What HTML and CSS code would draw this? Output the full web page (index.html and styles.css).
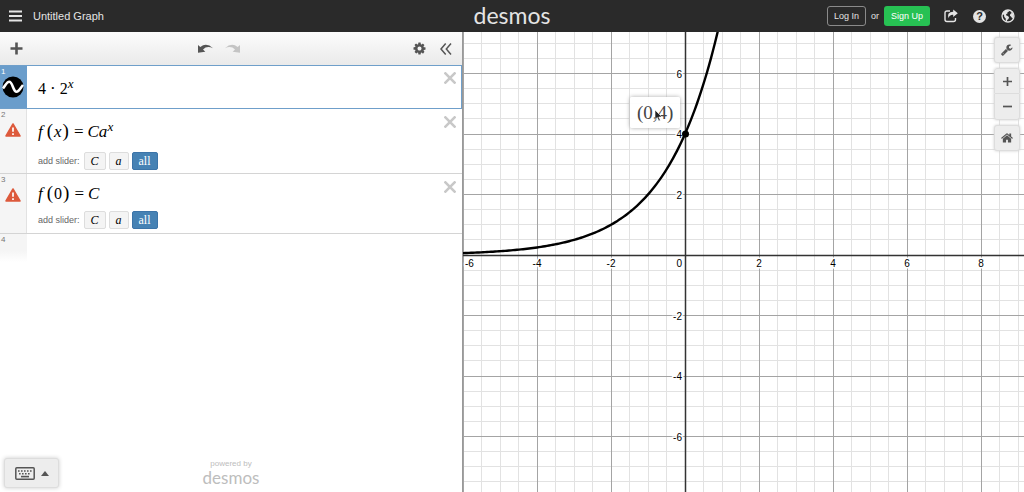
FILE: index.html
```html
<!DOCTYPE html>
<html lang="en">
<head>
<meta charset="utf-8">
<title>Untitled Graph</title>
<link rel="stylesheet" href="styles.css">
</head>
<body>
<div class="app">
  <header class="header">
    <div class="header-side">
      <button class="icon-button menu" aria-label="Menu"><svg width="14" height="12" viewBox="0 0 14 12"><path d="M0 1.500h13M0 6h13M0 10.500h13" stroke="#e4e4e4" stroke-width="1.800"/></svg></button>
      <h1 class="title">Untitled Graph</h1>
    </div>
    <div class="brand">desmos</div>
    <div class="header-side header-end">
      <button class="login">Log In</button>
      <span class="or">or</span>
      <button class="signup">Sign Up</button>
      <button class="icon-button share" aria-label="Share"><svg width="14" height="14" viewBox="0 0 14 14"><path d="M6 2H3Q1 2 1 4v6.500q0 2 2 2h6.500q2 0 2-2V9" fill="none" stroke="#e4e4e4" stroke-width="1.400"/><path d="M9.200 0.500L13.800 4.300L9.200 8.100V5.700Q5.500 5.500 4.300 9.300Q2.600 2.900 9.200 2.800Z" fill="#e4e4e4"/></svg></button>
      <button class="icon-button help" aria-label="Help"><span class="help-mark">?</span></button>
      <button class="icon-button" aria-label="Language"><svg width="14" height="14" viewBox="0 0 14 14"><circle cx="7" cy="7" r="6" fill="none" stroke="#e4e4e4" stroke-width="1.300"/><path d="M2.500 3Q4.500 0.800 7.500 1.200L8 2.500L6.300 3.400L6.500 4.600L5.300 5L5 6.200L6.300 6.800L8 8L7.500 10L6.200 11L5.800 12.500L4.800 12L4.700 9.500L3.300 8L3 6L1.500 5ZM9.500 2.500L12 4.500L12.800 7.500L11.300 9.600L10.200 7.800L8.900 6.800L9.300 5L10.500 4.200Z" fill="#e4e4e4"/></svg></button>
    </div>
  </header>

  <main class="workspace">
    <section class="panel" aria-label="Expressions">
      <div class="toolbar">
        <button class="icon-button" aria-label="Add item"><svg width="13" height="13" viewBox="0 0 13 13"><path d="M6.500 .5v12M.5 6.500h12" stroke="#555" stroke-width="2.600"/></svg></button>
        <div class="history">
          <button class="icon-button" aria-label="Undo"><svg width="15" height="10" viewBox="0 0 15 10"><path d="M0 1L2.300 3Q8.500-1.800 15 4.200Q9 1.500 5 5.400L7.300 7.700L0 8.800Z" fill="#555"/></svg></button>
          <button class="icon-button" aria-label="Redo"><svg width="15" height="10" viewBox="0 0 15 10"><path d="M15 1L12.700 3Q6.500-1.800 0 4.200Q6 1.500 10 5.400L7.700 7.700L15 8.800Z" fill="#c4c4c4"/></svg></button>
        </div>
        <div class="panel-tools">
          <button class="icon-button" aria-label="Edit list"><svg width="13" height="13" viewBox="64 64 1664 1664"><path fill="#555" d="M1152 896q0-106-75-181t-181-75-181 75-75 181 75 181 181 75 181-75 75-181zm512-109v222q0 12-8 23t-20 13l-185 28q-19 54-39 91 35 50 107 138 10 12 10 25t-9 23q-27 37-99 108t-94 71q-12 0-26-9l-138-108q-44 23-91 38-16 136-29 186-7 28-36 28h-222q-14 0-24.500-8.500t-11.500-21.500l-28-184q-49-16-90-37l-141 107q-10 9-25 9-14 0-25-11-126-114-165-168-7-10-7-23 0-12 8-23 15-21 51-66.500t54-70.500q-27-50-41-99l-183-27q-13-2-21-12.500t-8-23.500v-222q0-12 8-23t19-13l186-28q14-46 39-92-40-57-107-138-10-12-10-24 0-10 9-23 26-36 98.500-107.500t94.500-71.500q13 0 26 10l138 107q44-23 91-38 16-136 29-186 7-28 36-28h222q14 0 24.500 8.500t11.500 21.500l28 184q49 16 90 37l142-107q9-9 24-9 13 0 25 10 129 119 165 170 7 8 7 22 0 12-8 23-15 21-51 66.500t-54 70.500q26 50 41 98l183 28q13 2 21 12.500t8 23.500z"/></svg></button>
          <button class="icon-button" aria-label="Hide list"><svg width="12" height="12" viewBox="0 0 12 12"><path d="M5.700 .5L1 6l4.700 5.500M11 .5L6.300 6l4.700 5.500" fill="none" stroke="#555" stroke-width="1.500"/></svg></button>
        </div>
      </div>

      <ol class="expressions">
        <li class="row row-selected">
          <div class="gutter"><span class="index">1</span>
            <svg class="curve-icon" width="22" height="22" viewBox="0 0 22 22"><circle cx="11" cy="11" r="10.500" fill="#000"/><path d="M1 12.500C4 8.500 5 5.800 7.200 5.800C10.700 5.800 11 15.800 14.500 15.800C17 15.800 18.500 12 21 9" fill="none" stroke="#fff" stroke-width="2.600"/></svg>
          </div>
          <div class="body"><div class="math math-power"><span class="num">4</span><span class="dot">·</span><span class="num">2</span><sup>x</sup></div></div>
          <button class="icon-button close" aria-label="Delete expression 1"><svg width="12" height="12" viewBox="0 0 12 12"><path d="M.5 .5l11 11M11.500 .5L.5 11.500" stroke="#c8c8c8" stroke-width="2.600"/></svg></button>
        </li>
        <li class="row">
          <div class="gutter"><span class="index">2</span>
            <svg class="warning" width="16" height="14" viewBox="0 0 16 14"><path d="M8 1L15 13H1Z" fill="#dd5a3c" stroke="#dd5a3c" stroke-width="1.500" stroke-linejoin="round"/><path d="M8 4.500v4.300M8 10.200v1.800" stroke="#fff" stroke-width="1.700"/></svg>
          </div>
          <div class="body">
            <div class="math math-power">f<span class="paren paren-open">(</span>x<span class="paren">)</span><span class="eq">=</span>Ca<sup>x</sup></div>
            <div class="sliders"><span class="hint">add slider:</span><button class="chip">C</button><button class="chip">a</button><button class="chip chip-all">all</button></div>
          </div>
          <button class="icon-button close" aria-label="Delete expression 2"><svg width="12" height="12" viewBox="0 0 12 12"><path d="M.5 .5l11 11M11.500 .5L.5 11.500" stroke="#c8c8c8" stroke-width="2.600"/></svg></button>
        </li>
        <li class="row">
          <div class="gutter"><span class="index">3</span>
            <svg class="warning" width="16" height="14" viewBox="0 0 16 14"><path d="M8 1L15 13H1Z" fill="#dd5a3c" stroke="#dd5a3c" stroke-width="1.500" stroke-linejoin="round"/><path d="M8 4.500v4.300M8 10.200v1.800" stroke="#fff" stroke-width="1.700"/></svg>
          </div>
          <div class="body">
            <div class="math">f<span class="paren paren-open">(</span><span class="num">0</span><span class="paren">)</span><span class="eq">=</span>C</div>
            <div class="sliders"><span class="hint">add slider:</span><button class="chip">C</button><button class="chip">a</button><button class="chip chip-all">all</button></div>
          </div>
          <button class="icon-button close" aria-label="Delete expression 3"><svg width="12" height="12" viewBox="0 0 12 12"><path d="M.5 .5l11 11M11.500 .5L.5 11.500" stroke="#c8c8c8" stroke-width="2.600"/></svg></button>
        </li>
        <li class="row row-new">
          <div class="gutter"><span class="index">4</span></div>
        </li>
      </ol>

      <footer class="panel-footer">
        <button class="keypad" aria-label="Show keypad">
          <svg width="20" height="13" viewBox="0 0 20 13"><rect x=".8" y=".8" width="18.400" height="11.400" rx="1" fill="none" stroke="#555" stroke-width="1.500"/><path d="M3 4h14M4 6.800h12" stroke="#555" stroke-width="1.600" stroke-dasharray="1.600 1.400"/><path d="M6 9.600h8" stroke="#555" stroke-width="1.600"/></svg>
          <svg width="8" height="5" viewBox="0 0 8 5"><path d="M0 5L4 0L8 5Z" fill="#555"/></svg>
        </button>
        <div class="powered"><span class="powered-by">powered by</span><span class="powered-brand">desmos</span></div>
      </footer>
    </section>

    <section class="graph" aria-label="Graph">
      <svg class="plot" id="plot"></svg>
      <div class="point-label">(0,<span class="y-value">4</span>)</div>
      <svg class="cursor" width="9" height="13" viewBox="0 0 9 13"><path d="M1 1V10.500L3.300 8.500L4.800 12L6.300 11.300L4.800 8H8Z" fill="#222" stroke="#fff" stroke-width=".6"/></svg>
      <div class="graph-tools">
        <button class="tool" aria-label="Graph settings"><svg width="12" height="12" viewBox="64 64 1728 1728"><path fill="#555" d="M448 1472q0-26-19-45t-45-19-45 19-19 45 19 45 45 19 45-19 19-45zm644-420l-682 682q-37 37-90 37-52 0-91-37l-106-108q-38-36-38-90 0-53 38-91l681-681q39 98 114.500 173.500t173.500 114.500zm634-435q0 39-23 106-47 134-164.500 217.500t-258.500 83.500q-185 0-316.500-131.500t-131.500-316.500 131.500-316.500 316.500-131.500q58 0 121.500 16.500t107.500 46.500q16 11 16 28t-16 28l-293 169v224l193 107q5-3 79-48.500t135.500-81 70.500-35.500q15 0 23.500 10t8.500 25z"/></svg></button>
        <div class="zoom">
          <button class="tool" aria-label="Zoom in"><svg width="9" height="9" viewBox="0 0 9 9"><path d="M4.500 0v9M0 4.500h9" stroke="#555" stroke-width="1.700"/></svg></button>
          <button class="tool" aria-label="Zoom out"><svg width="9" height="9" viewBox="0 0 9 9"><path d="M0 4.500h9" stroke="#555" stroke-width="1.700"/></svg></button>
        </div>
        <button class="tool" aria-label="Default view"><svg width="12" height="12" viewBox="64 64 1664 1664"><path fill="#555" d="M1472 992v480q0 26-19 45t-45 19h-384v-384h-256v384h-384q-26 0-45-19t-19-45v-480q0-1 .5-3t.5-3l575-474 575 474q1 2 1 6zm223-69l-62 74q-8 9-21 11h-3q-13 0-21-7l-692-577-692 577q-12 8-24 7-13-2-21-11l-62-74q-8-10-7-23.500t11-21.500l719-599q32-26 76-26t76 26l244 204v-195q0-14 9-23t23-9h192q14 0 23 9t9 23v408l219 182q10 8 11 21.500t-7 23.500z"/></svg></button>
      </div>
    </section>
  </main>
</div>
<script src="plot.js"></script>
</body>
</html>
```
FILE: styles.css
```css
* { box-sizing: border-box; }
body { margin: 0; font-family: "Liberation Sans", Arial, sans-serif; font-size: 12px; color: #000; }
button { margin: 0; padding: 0; font: inherit; cursor: pointer; }
svg { display: block; }

.app { display: flex; flex-direction: column; height: 100vh; overflow: hidden; background: #fff; }

.header { display: grid; grid-template-columns: 1fr auto 1fr; align-items: center; flex: none; height: 32px; background: #2a2a2a; color: #e4e4e4; }
.header-side { display: flex; align-items: center; padding: 0 9px; }
.header-end { justify-content: flex-end; }
.icon-button { display: flex; align-items: center; justify-content: center; border: 0; background: none; color: inherit; }
.title { margin: 0 0 0 10px; font-size: 11px; font-weight: normal; }
.brand { padding-bottom: 2px; font-family: Lato, sans-serif; font-size: 23px; line-height: 28px; }
.login, .signup { height: 20px; border-radius: 3px; font-size: 9px; }
.login { padding: 0 6px; border: 1px solid #8a8a8a; background: none; color: #e4e4e4; }
.or { margin: 0 5px; font-size: 9px; }
.signup { padding: 0 7px; border: 0; background: #27c153; color: #fff; }
.share { margin-left: 14px; }
.help { margin: 0 15px; }
.help-mark { width: 13px; height: 13px; border-radius: 50%; background: #e4e4e4; color: #2a2a2a; font-size: 11px; font-weight: bold; line-height: 13px; text-align: center; }

.workspace { display: grid; grid-template-columns: 463px 1fr; flex: 1; min-height: 0; }
.panel { display: flex; flex-direction: column; min-height: 0; border-right: 1px solid #999; }
.toolbar { display: grid; grid-template-columns: 1fr auto 1fr; align-items: center; flex: none; height: 33px; padding: 0 10px; background: linear-gradient(#fcfcfc, #eaeaea); }
.toolbar > .icon-button { justify-self: start; }
.history { display: flex; gap: 12px; padding-right: 24px; }
.panel-tools { display: flex; justify-content: flex-end; gap: 14px; }

.expressions { flex: 1; margin: 0; padding: 0; list-style: none; }
.row { position: relative; display: flex; min-height: 60px; border-bottom: 1px solid #d4d4d4; }
.gutter { flex: none; width: 27px; border-right: 1px solid #e2e2e2; background: #f5f5f5; }
.index { display: block; padding: 1px 0 0 1px; color: #777; font-size: 8px; line-height: 9px; }
.warning { margin: 4px 0 0 5px; }
.body { flex: 1; padding: 9px 0 3px 11px; }
.math { font-family: "Liberation Serif", "Times New Roman", serif; font-style: italic; font-size: 17px; line-height: 22px; }
.math-power { line-height: 28px; }
.math sup { font-size: 13px; line-height: 0; vertical-align: 6px; }
.num, .paren, .eq, .dot { font-style: normal; }
.num { font-size: 16px; }
.paren { margin: 0 1px; font-size: 19px; line-height: 0; }
.paren-open { margin-left: 4px; }
.eq { margin: 0 4px; }
.dot { margin: 0 4px; }
.sliders { display: flex; align-items: center; gap: 3px; margin-top: 6px; }
.hint { margin-right: 1px; color: #666; font-size: 9px; }
.chip { height: 18px; padding: 0 6px; border: 1px solid #ddd; border-radius: 2px; background: #f4f4f4; font-family: "Liberation Serif", "Times New Roman", serif; font-size: 12px; font-style: italic; line-height: 16px; }
.chip-all { border-color: #3c74a8; background: #4682b4; color: #fff; font-style: normal; }
.close { position: absolute; top: 7px; right: 6px; }

.row-selected { min-height: 44px; border: 1px solid #6f9fca; border-left: 0; }
.row-selected .gutter { border: 0; background: #6a9dcb; }
.row-selected .index { color: #fff; }
.row-selected .close { top: 6px; right: 5px; }
.curve-icon { margin: 0 0 0 2px; }
.row-new { min-height: 28px; border: 0; }
.row-new .gutter { border: 0; background: linear-gradient(#f5f5f5 60%, #fff); }

.panel-footer { display: grid; grid-template-columns: 1fr auto 1fr; align-items: center; flex: none; padding: 0 4px 4px; }
.keypad { display: flex; align-items: center; justify-content: center; gap: 6px; justify-self: start; width: 55px; height: 30px; border: 1px solid #ddd; border-radius: 3px; background: #ededed; box-shadow: 0 0 4px #ccc; }
.powered { display: flex; flex-direction: column; align-items: center; color: #bdbdbd; font-family: Lato, sans-serif; }
.powered-by { font-family: "Liberation Sans", Arial, sans-serif; font-size: 8px; line-height: 9px; }
.powered-brand { font-size: 17px; line-height: 20px; }

.graph { position: relative; min-width: 0; overflow: hidden; }
.plot { width: 100%; height: 100%; }
.minor { stroke: #e2e2e2; }
.major { stroke: #a4a4a4; }
.axis { stroke: #333; stroke-width: 1.5; }
.curve { fill: none; stroke: #000; stroke-width: 2.4; }
.tick { fill: #000; stroke: #fff; stroke-width: 3px; paint-order: stroke; font-size: 10px; }
.point-label { position: absolute; left: 167px; top: 65px; padding: 4px 7px; border-radius: 2px; background: rgba(255, 255, 255, .92); box-shadow: 0 0 4px #aaa; color: #444; font-family: "Liberation Serif", "Times New Roman", serif; font-size: 19px; line-height: 23px; }
.cursor { position: absolute; left: 191px; top: 77px; }
.graph-tools { position: absolute; top: 5px; right: 4px; display: flex; flex-direction: column; gap: 5px; }
.tool { display: flex; align-items: center; justify-content: center; width: 26px; height: 26px; border: 1px solid #ddd; border-radius: 3px; background: #ededed; box-shadow: 0 0 3px #ccc; }
.zoom { display: flex; flex-direction: column; border-radius: 3px; box-shadow: 0 0 3px #ccc; }
.zoom .tool { box-shadow: none; }
.zoom .tool:first-child { border-radius: 3px 3px 0 0; }
.zoom .tool:last-child { border-top: 0; border-radius: 0 0 3px 3px; }
```
FILE: plot.js
```js
const plot = document.getElementById("plot");
const NS = "http://www.w3.org/2000/svg";
const origin = { x: 222, y: 223 };
const unit = { x: 37, y: 30.25 };

function add(name, attributes, text) {
  const node = document.createElementNS(NS, name);
  for (const key in attributes) node.setAttribute(key, attributes[key]);
  if (text !== undefined) node.textContent = text;
  plot.appendChild(node);
}

const px = (x) => origin.x + x * unit.x;
const py = (y) => origin.y - y * unit.y;
const snap = (v) => Math.floor(v) + 0.5;

function draw() {
  plot.replaceChildren();
  const { width, height } = plot.getBoundingClientRect();
  const left = Math.ceil(-origin.x / unit.x * 2);
  const right = Math.floor((width - origin.x) / unit.x * 2);
  const top = Math.floor(origin.y / unit.y * 2);
  const bottom = Math.ceil((origin.y - height) / unit.y * 2);
  const vertical = (i, kind) => add("line", { x1: snap(px(i / 2)), x2: snap(px(i / 2)), y1: 0, y2: height, class: kind });
  const horizontal = (i, kind) => add("line", { x1: 0, x2: width, y1: snap(py(i / 2)), y2: snap(py(i / 2)), class: kind });

  for (const kind of ["minor", "major"]) {
    const step = kind === "minor" ? 1 : 4;
    for (let i = Math.ceil(left / step) * step; i <= right; i += step) vertical(i, kind);
    for (let i = Math.ceil(bottom / step) * step; i <= top; i += step) horizontal(i, kind);
  }
  vertical(0, "axis");
  horizontal(0, "axis");

  for (let i = Math.ceil(left / 4) * 4; i <= right; i += 4) {
    const n = i / 2;
    const edge = px(n) < 8;
    const x = n === 0 ? px(0) - 3 : edge ? 2 : px(n);
    add("text", { x, y: origin.y + 12, class: "tick", "text-anchor": n === 0 ? "end" : edge ? "start" : "middle" }, n);
  }
  for (let i = Math.ceil(bottom / 4) * 4; i <= top; i += 4) {
    if (i !== 0) add("text", { x: origin.x - 3, y: py(i / 2) + 4, class: "tick", "text-anchor": "end" }, i / 2);
  }

  const points = [];
  for (let x = 0; x <= width; x += 2) {
    const y = py(4 * 2 ** ((x - origin.x) / unit.x));
    points.push(x + "," + y);
    if (y < -20) break;
  }
  add("polyline", { points: points.join(" "), class: "curve" });
  add("circle", { cx: px(0) + 0.5, cy: py(4), r: 3.5 });
}

draw();
window.addEventListener("resize", draw);
```
